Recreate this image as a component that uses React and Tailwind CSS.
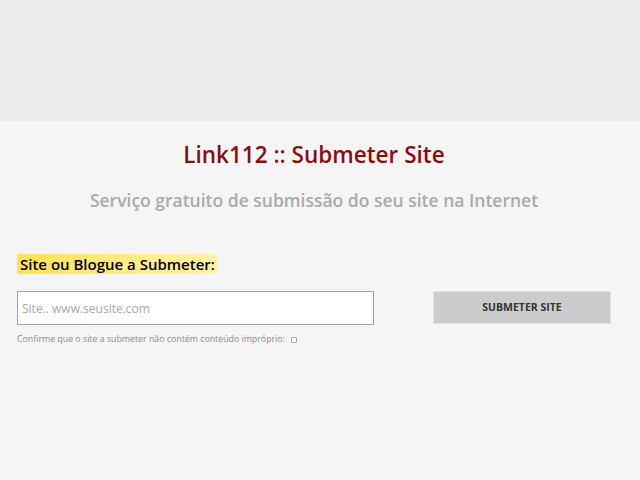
export default function App() {
  return (
    <div className="min-h-[480px] w-[640px] bg-[#f5f5f5] font-['Open_Sans',sans-serif]">
      {/* faixa superior */}
      <div className="h-[121px] bg-[#ebebeb]" />

      <div className="px-[17px]">
        <div className="pr-[12px]">
          <h1 className="mt-[19px] text-center text-[22.5px] leading-[30px] font-semibold text-[#8b0d0d]">
            Link112 :: Submeter Site
          </h1>
          <p className="mt-[17px] text-center text-[17.5px] leading-[26px] font-semibold text-[#aaaaaa]">
            Serviço gratuito de submissão do seu site na Internet
          </p>
        </div>

        <div className="mt-[39px]">
          <span className="inline-block bg-gradient-to-r from-[#fde24f] to-[#fff3a6] px-[3px] text-[15px] leading-[20px] font-semibold text-black">
            Site ou Blogue a Submeter:
          </span>
        </div>

        <div className="mt-[15px] flex items-start">
          <div className="w-[357px]">
            <input
              type="text"
              placeholder="Site.. www.seusite.com"
              className="h-[34px] w-full border border-[#a3a3a3] bg-white px-[4px] text-[12px] text-[#333] outline-none placeholder:text-[#a8a8a8]"
            />
            <label className="mt-[8px] flex items-center gap-[3px] text-[8.8px] text-[#8c8c8c]">
              Confirme que o site a submeter não contém conteúdo impróprio:
              <span className="ml-[3px] inline-block h-[6px] w-[6px] rounded-[1px] border border-[#aaa] bg-white" />
            </label>
          </div>
          <button className="ml-[59px] h-[33px] w-[178px] border border-[#e3e3e3] bg-[#cccccc] text-[10.5px] font-bold text-[#333]">
            SUBMETER SITE
          </button>
        </div>
      </div>
    </div>
  );
}
